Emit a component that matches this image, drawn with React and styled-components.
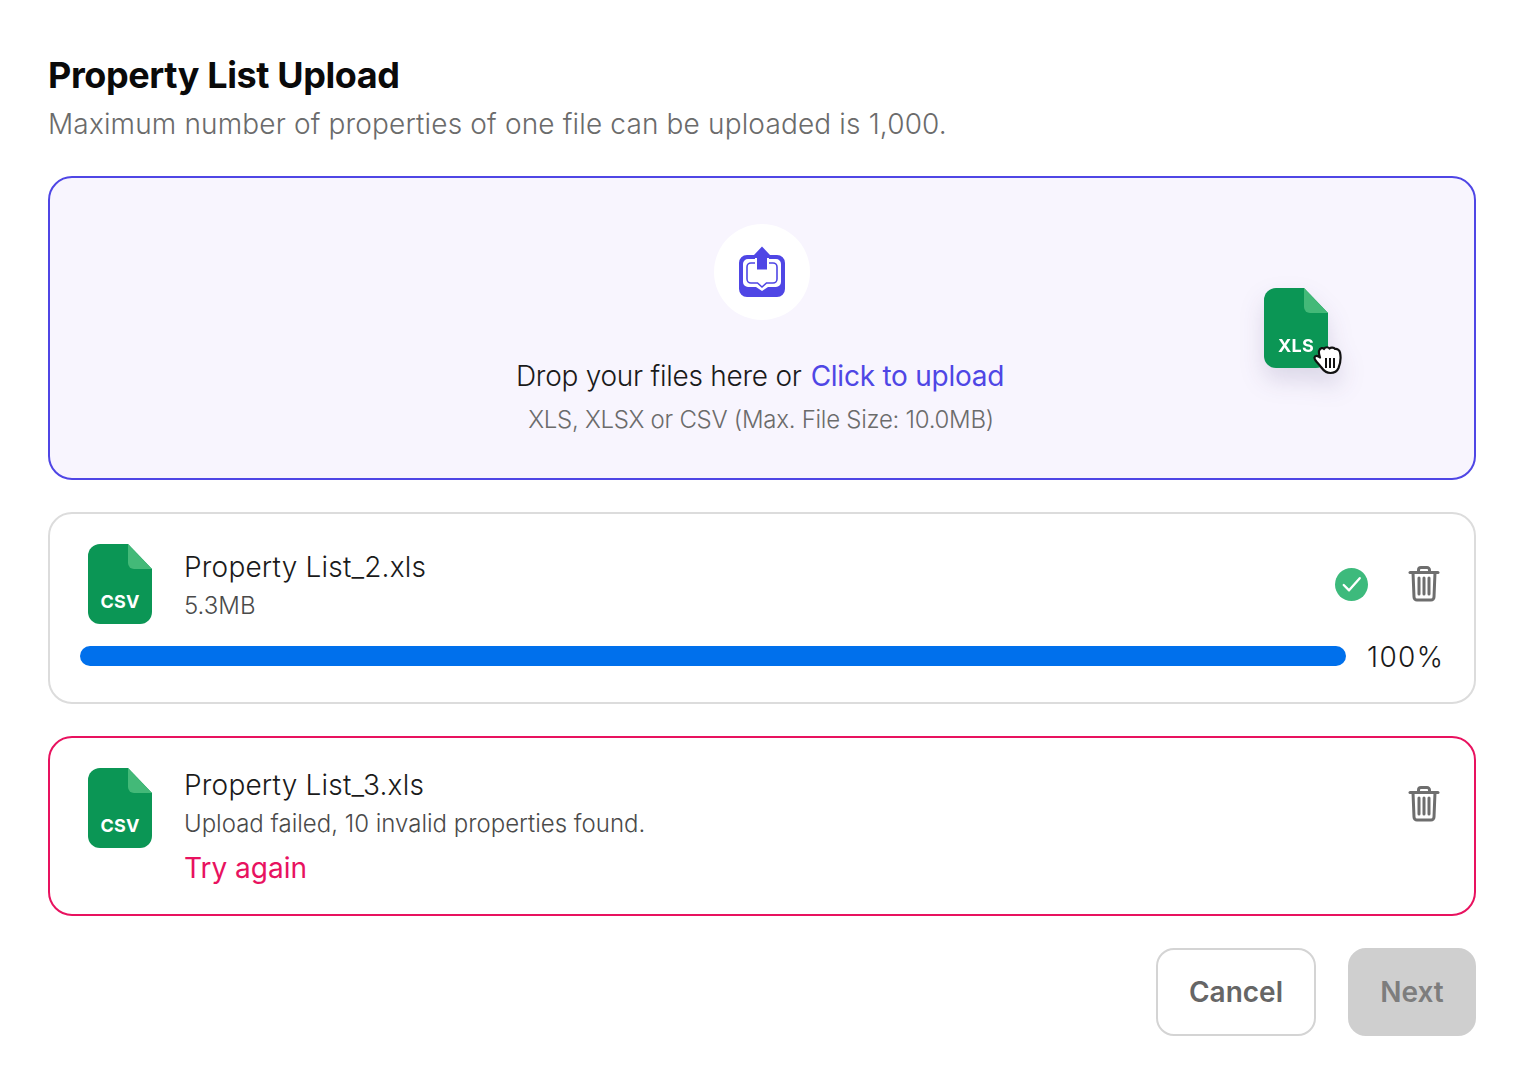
import React from "react";
import styled, { createGlobalStyle } from "styled-components";

const GlobalStyle = createGlobalStyle`
    html, body {
        margin: 0;
        background: #fff;
        font-family: "Inter", "Liberation Sans", sans-serif;
    }
`;

const Page = styled.div`
    width: 1524px;
    height: 1084px;
    box-sizing: border-box;
    padding: 52px 48px 48px;
    display: flex;
    flex-direction: column;
`;

const Title = styled.h1`
    margin: 0;
    font-size: 36px;
    line-height: 46px;
    font-weight: 700;
    letter-spacing: -0.4px;
    color: #0a0a0a;
`;

const Subtitle = styled.p`
    margin: 4px 0 0;
    font-size: 28px;
    line-height: 44px;
    font-weight: 300;
    letter-spacing: 0.155px;
    color: #6b6b6b;
`;

const DropZone = styled.div`
    position: relative;
    margin-top: 30px;
    height: 304px;
    box-sizing: border-box;
    border: 2px solid #4f46e5;
    border-radius: 24px;
    background: #f8f5fe;
    display: flex;
    flex-direction: column;
    align-items: center;
    padding-top: 46px;
`;

const IconCircle = styled.div`
    width: 96px;
    height: 96px;
    border-radius: 50%;
    background: #fff;
    display: flex;
    align-items: center;
    justify-content: center;
`;

const DropText = styled.div`
    margin: 36px 4px 0 0;
    font-size: 28px;
    line-height: 40px;
    font-weight: 300;
    letter-spacing: -0.25px;
    color: #1a1a1a;
    display: flex;
    gap: 9px;
`;

const UploadLink = styled.span`
    color: #4f46e5;
    font-weight: 400;
`;

const DropHint = styled.div`
    margin: 6px 2px 0 0;
    font-size: 24px;
    line-height: 36px;
    font-weight: 300;
    letter-spacing: -0.27px;
    color: #6b6b6b;
`;

const DragFile = styled.div`
    position: absolute;
    left: 1214px;
    top: 110px;
    filter: drop-shadow(0 12px 12px rgba(40, 30, 90, 0.14));
`;

const Cursor = styled.svg`
    position: absolute;
    left: 48px;
    top: 57px;
`;

const FileCard = styled.div`
    margin-top: 32px;
    height: ${(p) => p.$height}px;
    box-sizing: border-box;
    border: 2px solid ${(p) => (p.$failed ? "#e8125f" : "#dcdcdc")};
    border-radius: 24px;
    background: #fff;
    padding: 30px 30px 0 30px;
`;

const CardTop = styled.div`
    display: flex;
    align-items: flex-start;
`;

const FileBody = styled.div`
    flex: 1;
    margin-left: 32px;
    margin-top: ${(p) => p.$top}px;
    min-width: 0;
`;

const FileThumb = styled.div`
    margin-left: 8px;
    flex: none;
    height: 80px;
`;

const FileName = styled.div`
    font-size: 28px;
    line-height: 44px;
    font-weight: 300;
    letter-spacing: 0.2px;
    color: #1a1a1a;
`;

const FileMeta = styled.div`
    font-size: 24px;
    line-height: 34px;
    font-weight: 300;
    color: #4a4a4a;
`;

const Retry = styled.div`
    margin-top: 9px;
    font-size: 28px;
    line-height: 36px;
    font-weight: 400;
    color: #e8125f;
`;

const Actions = styled.div`
    display: flex;
    align-items: center;
    gap: 40px;
    margin-right: 4px;
    padding-top: ${(p) => p.$top}px;
`;

const ProgressRow = styled.div`
    display: flex;
    align-items: center;
    margin-top: 19px;
    gap: 21px;
`;

const ProgressTrack = styled.div`
    flex: 1;
    height: 20px;
    border-radius: 10px;
    background: #0070ec;
`;

const Percent = styled.div`
    flex: none;
    width: 77px;
    margin-top: 2px;
    font-size: 28px;
    line-height: 24px;
    font-weight: 300;
    letter-spacing: 1.4px;
    color: #1a1a1a;
`;

const Footer = styled.div`
    margin-top: 32px;
    display: flex;
    justify-content: flex-end;
    gap: 32px;
`;

const Button = styled.button`
    height: 88px;
    width: ${(p) => p.$width}px;
    box-sizing: border-box;
    border-radius: 18px;
    border: 2px solid ${(p) => (p.$disabled ? "#cfcfcf" : "#d4d4d4")};
    background: ${(p) => (p.$disabled ? "#cfcfcf" : "#fff")};
    color: ${(p) => (p.$disabled ? "#7d7d7d" : "#666")};
    font-family: inherit;
    font-size: 28px;
    font-weight: 600;
`;

function FileIcon({ label }) {
    return (
        <svg width="64" height="80" viewBox="0 0 64 80">
            <path d="M12 0H40L64 25V68a12 12 0 0 1-12 12H12A12 12 0 0 1 0 68V12A12 12 0 0 1 12 0Z" fill="#0b9655" />
            <path d="M40 0L64 25H46a6 6 0 0 1-6-6Z" fill="#43b978" />
            <text
                x="32"
                y="64"
                textAnchor="middle"
                fontFamily="Inter, sans-serif"
                fontSize="18"
                fontWeight="700"
                letterSpacing="0.2"
                fill="#fff"
            >
                {label}
            </text>
        </svg>
    );
}

function UploadIcon() {
    return (
        <svg width="48" height="52" viewBox="0 0 48 52">
            <path
                d="M9 9H17V13H10a5 5 0 0 0-5 5V36a5 5 0 0 0 5 5H18L24 45L30 41H38a5 5 0 0 0 5-5V18a5 5 0 0 0-5-5H31V9H39a8 8 0 0 1 8 8V43a8 8 0 0 1-8 8H9a8 8 0 0 1-8-8V17a8 8 0 0 1 8-8Z"
                fill="#4f46e5"
            />
            <path
                d="M17 17H13a4 4 0 0 0-4 4V33a4 4 0 0 0 4 4H19.500L24 41L28.500 37H35a4 4 0 0 0 4-4V21a4 4 0 0 0-4-4H31"
                fill="none"
                stroke="#4f46e5"
                strokeWidth="1.6"
            />
            <path d="M24 0.500L32 9V12H29V23.500H19V12H16V9Z" fill="#4f46e5" />
        </svg>
    );
}

function TrashIcon() {
    return (
        <svg width="32" height="36" viewBox="0 0 32 36" fill="none" stroke="#6e6e6e" strokeWidth="3" strokeLinecap="round" strokeLinejoin="round">
            <path d="M2 6.500H30" />
            <path d="M10.500 6V4A2.500 2.500 0 0 1 13 1.500H19A2.500 2.500 0 0 1 21.500 4V6" />
            <path d="M5 6.500L6 31A3 3 0 0 0 9 34H23A3 3 0 0 0 26 31L27 6.500" />
            <path d="M11 12V28M16 12V28M21 12V28" />
        </svg>
    );
}

function CheckIcon() {
    return (
        <svg width="33" height="33" viewBox="0 0 34 34">
            <circle cx="17" cy="17" r="17" fill="#3dba7c" />
            <path d="M9 17.500L14.500 23L25.500 10.500" fill="none" stroke="#fff" strokeWidth="2.400" strokeLinecap="round" strokeLinejoin="round" />
        </svg>
    );
}

function HandCursor() {
    return (
        <Cursor width="30" height="30" viewBox="0 0 30 30">
            <path
                d="M7 6C8 2.500 11 2.500 12 4C13.500 1.500 16.500 2 17.500 3.500C19 2 22 2.500 23 4C25 3.500 27.500 5 28 7.500C29 12 28.500 18 26.500 23C25 26.500 22.500 28 18.500 28C14 28 11.500 25.500 9 22C7 19 2 15.500 2.500 12.500C3 10 6 10.500 8 12.500C7.500 10.500 6.500 8 7 6Z"
                fill="#fff"
                stroke="#111"
                strokeWidth="2.200"
                strokeLinejoin="round"
            />
            <path d="M14 13V23M18 13V23M22 13V23" stroke="#111" strokeWidth="2" />
        </Cursor>
    );
}

export default function App() {
    return (
        <Page>
            <GlobalStyle />
            <Title>Property List Upload</Title>
            <Subtitle>Maximum number of properties of one file can be uploaded is 1,000.</Subtitle>

            <DropZone>
                <IconCircle>
                    <UploadIcon />
                </IconCircle>
                <DropText>
                    <span>Drop your files here or</span>
                    <UploadLink>Click to upload</UploadLink>
                </DropText>
                <DropHint>XLS, XLSX or CSV (Max. File Size: 10.0MB)</DropHint>
                <DragFile>
                    <FileIcon label="XLS" />
                    <HandCursor />
                </DragFile>
            </DropZone>

            <FileCard $height={192}>
                <CardTop>
                    <FileThumb>
                        <FileIcon label="CSV" />
                    </FileThumb>
                    <FileBody $top={1}>
                        <FileName>Property List_2.xls</FileName>
                        <FileMeta>5.3MB</FileMeta>
                    </FileBody>
                    <Actions $top={22}>
                        <CheckIcon />
                        <TrashIcon />
                    </Actions>
                </CardTop>
                <ProgressRow>
                    <ProgressTrack />
                    <Percent>100%</Percent>
                </ProgressRow>
            </FileCard>

            <FileCard $height={180} $failed>
                <CardTop>
                    <FileThumb>
                        <FileIcon label="CSV" />
                    </FileThumb>
                    <FileBody $top={-5}>
                        <FileName>Property List_3.xls</FileName>
                        <FileMeta>Upload failed, 10 invalid properties found.</FileMeta>
                        <Retry>Try again</Retry>
                    </FileBody>
                    <Actions $top={18}>
                        <TrashIcon />
                    </Actions>
                </CardTop>
            </FileCard>

            <Footer>
                <Button $width={160}>Cancel</Button>
                <Button $width={128} $disabled>Next</Button>
            </Footer>
        </Page>
    );
}
